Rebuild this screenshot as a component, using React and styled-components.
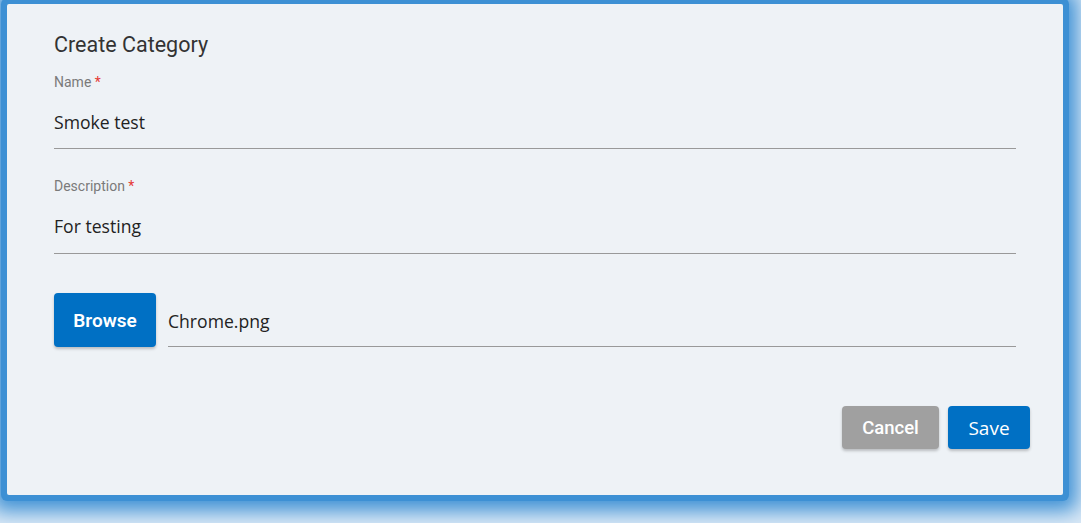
import React from 'react';
import styled, { createGlobalStyle } from 'styled-components';

const GlobalStyle = createGlobalStyle`
  html, body {
    margin: 0;
    padding: 0;
    background: #dbe9f6;
    overflow: hidden;
  }
  body {
    font-family: Roboto, "Liberation Sans", sans-serif;
  }
`;

const Page = styled.div`
  width: 1081px;
  height: 523px;
  box-sizing: border-box;
  padding: 4px 18px 28px 7px;
  background: #dbe9f6;
`;

const Dialog = styled.div`
  height: 100%;
  box-sizing: border-box;
  background: #eef2f6;
  border-radius: 2px;
  box-shadow: 0 0 0 6px #3d90d4, 0 2px 20px 14px #3d90d4;
  padding: 27px 33px 0 47px;
  display: flex;
  flex-direction: column;
`;

const Title = styled.h2`
  margin: 0;
  font-family: Roboto, sans-serif;
  font-weight: 400;
  font-size: 21.5px;
  line-height: 28px;
  color: #333;
`;

const Body = styled.div`
  padding-right: 14px;
`;

const Field = styled.div`
  margin-top: ${p => p.$top}px;
  border-bottom: 1px solid #999;
`;

const Label = styled.div`
  font-family: Roboto, sans-serif;
  font-size: 14px;
  line-height: 16px;
  color: #7a7a7a;

  span {
    color: #e53935;
  }
`;

const Value = styled.div`
  font-family: "Open Sans", sans-serif;
  font-size: 17.6px;
  line-height: 22px;
  color: #222;
  padding: ${p => p.$pad};
`;

const FileRow = styled.div`
  display: flex;
  align-items: flex-end;
  gap: 12px;
  margin-top: 39px;
`;

const Button = styled.button`
  border: none;
  border-radius: 4px;
  color: #fff;
  background: ${p => p.$bg};
  box-shadow: 0 2px 3px rgba(0, 0, 0, 0.22);
  width: ${p => p.$w}px;
  height: ${p => p.$h}px;
  font-family: ${p => p.$font};
  font-weight: ${p => p.$weight};
  font-size: ${p => p.$size}px;
  padding: 0;
  cursor: pointer;
`;

const FileName = styled.div`
  flex: 1;
  border-bottom: 1px solid #999;
  font-family: "Open Sans", sans-serif;
  font-size: 17.6px;
  line-height: 22px;
  color: #222;
  padding: 0 0 14px 0;
`;

const Actions = styled.div`
  display: flex;
  justify-content: flex-end;
  gap: 9px;
  margin-top: 59px;
`;

export default function App() {
  return (
    <>
      <GlobalStyle />
      <Page>
        <Dialog>
          <Title>Create Category</Title>
          <Body>
            <Field $top={15}>
              <Label>Name <span>*</span></Label>
              <Value $pad="21px 0 15px">Smoke test</Value>
            </Field>
            <Field $top={29}>
              <Label>Description <span>*</span></Label>
              <Value $pad="21px 0 16px">For testing</Value>
            </Field>
            <FileRow>
              <Button $bg="#0070c4" $w={102} $h={54} $size={19} $font="Roboto, sans-serif" $weight={600}>
                Browse
              </Button>
              <FileName>Chrome.png</FileName>
            </FileRow>
          </Body>
          <Actions>
            <Button $bg="#a0a0a0" $w={97} $h={43} $size={18.5} $font="Roboto, sans-serif" $weight={500}>
              Cancel
            </Button>
            <Button $bg="#0070c4" $w={82} $h={43} $size={19} $font='"Open Sans", sans-serif' $weight={500}>
              Save
            </Button>
          </Actions>
        </Dialog>
      </Page>
    </>
  );
}
